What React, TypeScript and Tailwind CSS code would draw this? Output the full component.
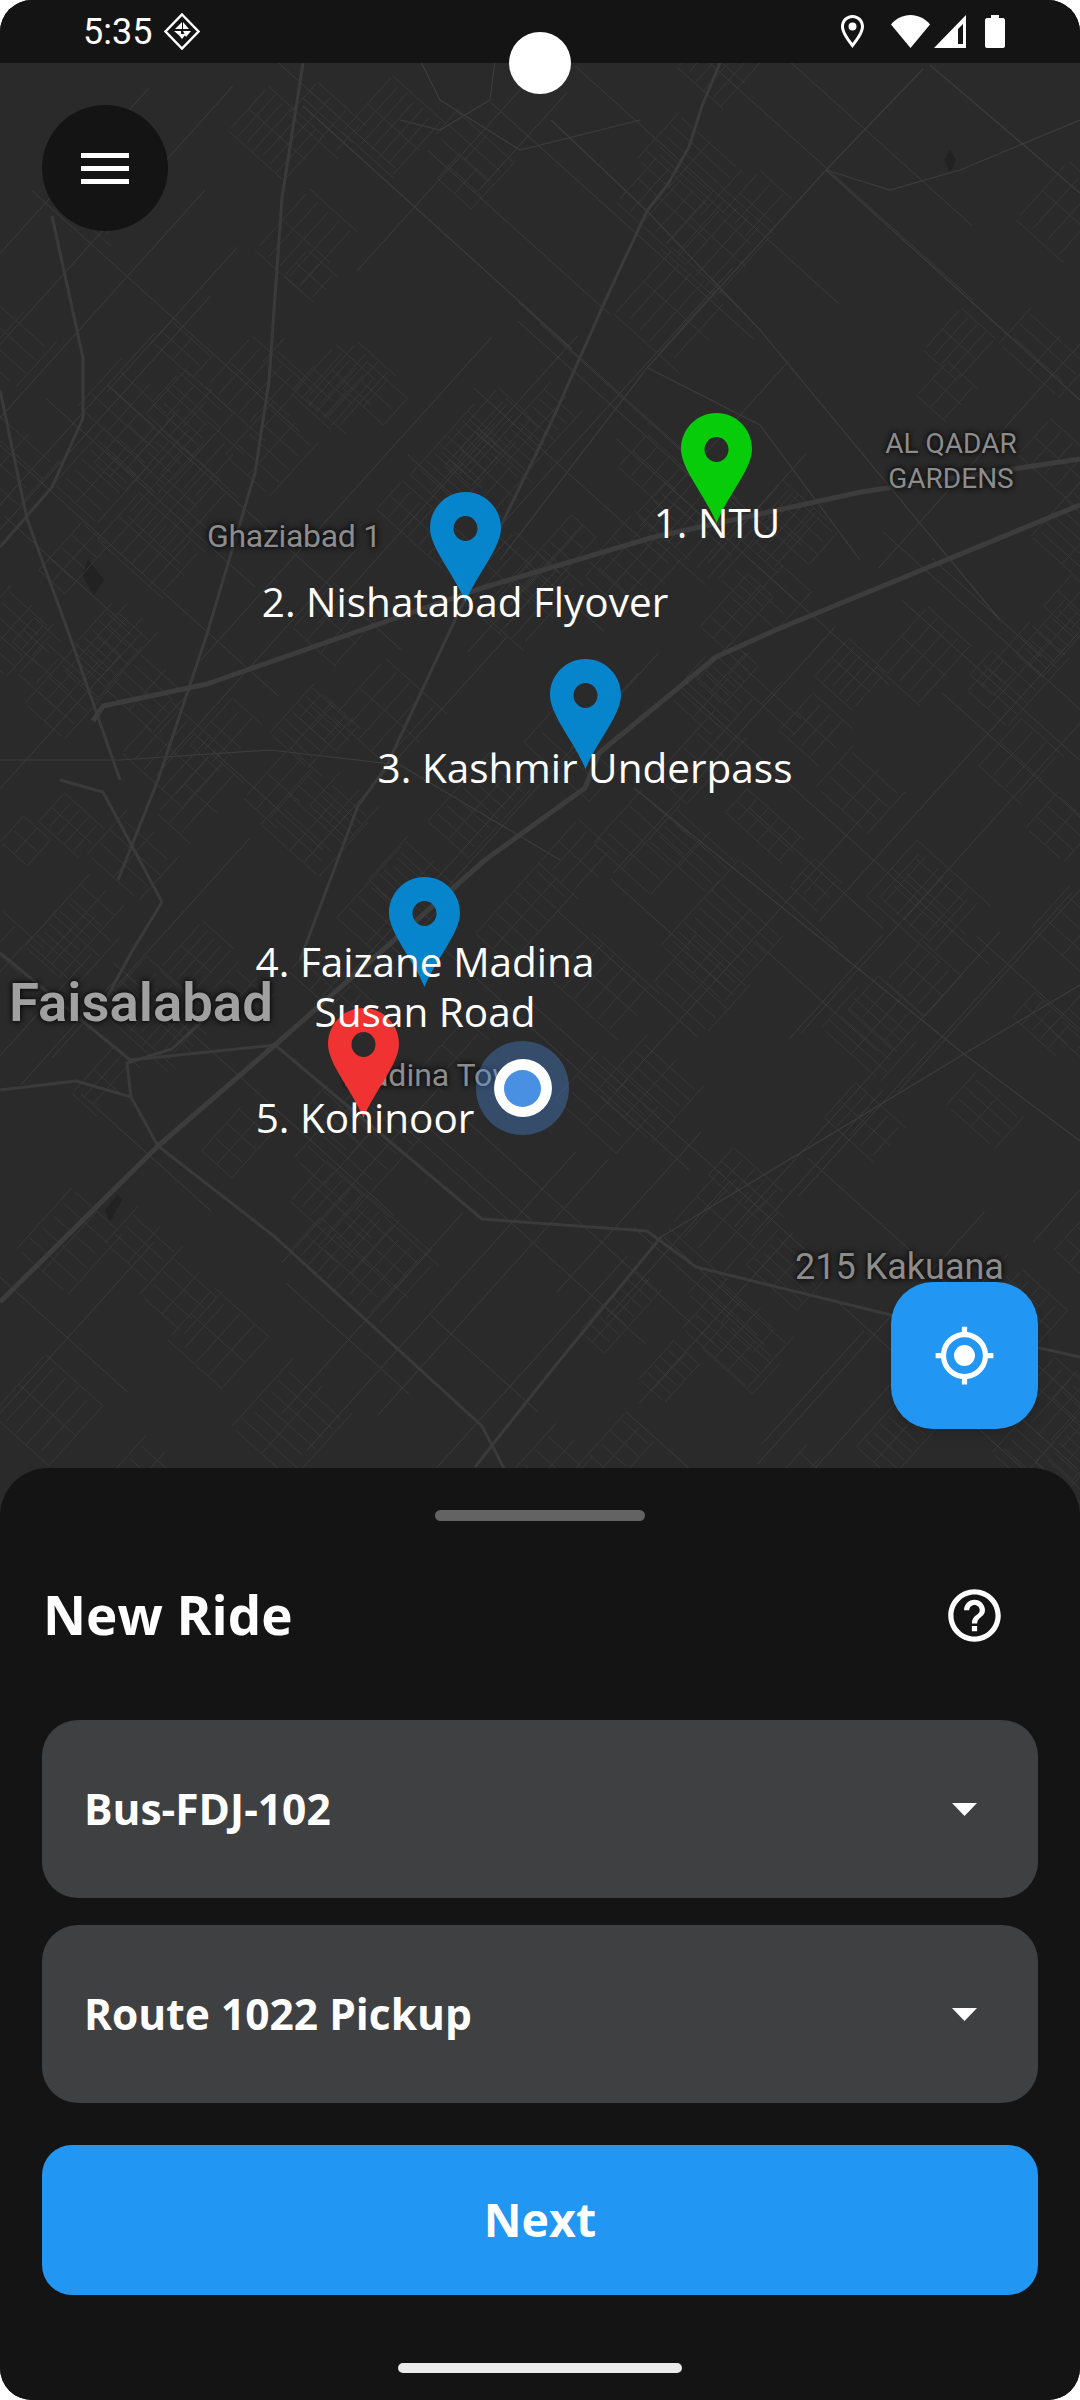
import { MdHelpOutline, MdMyLocation } from "react-icons/md";

// street pattern of the map, seeded so that every render gives the same picture
let seed = 20;
const rnd = () => {
  seed = (seed * 16807) % 2147483647;
  return seed / 2147483647;
};

const DOWN = (42 * Math.PI) / 180;
const UP = (-48 * Math.PI) / 180;

const seg = (x: number, y: number, a: number, len: number) => {
  const dx = (Math.cos(a) * len) / 2;
  const dy = (Math.sin(a) * len) / 2;
  return `M${(x - dx).toFixed(1)} ${(y - dy).toFixed(1)}L${(x + dx).toFixed(1)} ${(y + dy).toFixed(1)}`;
};

const buildBlocks = () => {
  let d = "";
  for (let i = 0; i < 190; i++) {
    const cx = rnd() * 1100;
    const cy = 60 + rnd() * 1420;
    // the north-east and the south are more open than the west
    const open = cx > 520 && cy < 500 ? 0.62 : cy > 1150 ? 0.3 : cx < 450 ? 0 : 0.18;
    if (rnd() < open) continue;
    const a = rnd() > 0.5 ? DOWN : UP;
    const b = a === DOWN ? UP : DOWN;
    const len = 30 + rnd() * 60;
    const wide = 30 + rnd() * 70;
    const step = 10 + rnd() * 10;
    for (let o = -wide / 2; o < wide / 2; o += step) {
      const x = cx + Math.cos(b) * o;
      const y = cy + Math.sin(b) * o;
      d += seg(x, y, a, len * (0.8 + rnd() * 0.2));
    }
    d += seg(cx, cy, b, wide);
    d += seg(cx + (Math.cos(a) * len) / 2, cy + (Math.sin(a) * len) / 2, b, wide);
    d += seg(cx - (Math.cos(a) * len) / 2, cy - (Math.sin(a) * len) / 2, b, wide);
  }
  return d;
};

const buildStreets = () => {
  let d = "";
  for (let i = 0; i < 90; i++) {
    const a = rnd() > 0.5 ? DOWN : UP;
    d += seg(rnd() * 1080, 60 + rnd() * 1420, a, 100 + rnd() * 360);
  }
  return d;
};

const blocks = buildBlocks();
const streets = buildStreets();

const bigRoads = [
  "M0 1302L158 1146L275 1045L485 860L585 788L599 753L716 657L778 629L1080 505",
  "M93 721L103 706L207 684L482 588L654 537L861 492L1080 459",
];

const midRoads = [
  "M720 63L702 106L689 147L668 184L647 211L606 299L551 423L455 620L386 767L358 806L300 960",
  "M303 63L282 198L269 381L255 473L207 634L158 780L118 880",
  "M52 216L83 358L83 418L52 487L0 547",
  "M0 390L27 519L69 634L120 780",
  "M275 1045L482 1219L647 1231L696 1267L895 1316L1080 1357",
  "M158 1146L275 1237L482 1426L510 1480",
  "M0 1090L76 1081L131 1097L158 1146",
  "M131 1097L127 1063L172 1049L225 1000",
  "M661 1237L551 1371L475 1467",
  "M0 953L130 1060L275 1045",
  "M162 902L103 792L60 780",
  "M162 902L131 953L100 1010",
];

const thinRoads = [
  "M303 106L572 349",
  "M551 120L647 211L760 330L1000 620",
  "M1080 985L964 1054L661 1237",
  "M634 788L964 1054L1080 1141",
  "M930 65L1080 193",
  "M923 69L826 170L647 368L500 560",
  "M826 170L1080 400",
  "M0 760L120 760L270 750L400 765L560 860",
  "M1080 120L960 170L890 190L826 170",
  "M648 368L760 425L860 560",
  "M420 60L440 100L520 150L640 120",
  "M495 60L490 100L440 130L400 120",
];

const pins = [
  { name: "green", box: "left-[681px] top-[350px]", fill: "#06cc0a" },
  { name: "blue-2", box: "left-[430px] top-[429px]", fill: "#0785cc" },
  { name: "blue-3", box: "left-[550px] top-[596px]", fill: "#0785cc" },
  { name: "blue-4", box: "left-[389px] top-[814px]", fill: "#0785cc" },
  { name: "red", box: "left-[328px] top-[945px]", fill: "#f03232" },
];

const stops = [
  { box: "left-[717px] top-[435px]", lines: ["1. NTU"] },
  { box: "left-[465px] top-[514px]", lines: ["2. Nishatabad Flyover"] },
  { box: "left-[585px] top-[680px]", lines: ["3. Kashmir Underpass"] },
  { box: "left-[425px] top-[874px]", lines: ["4. Faizane Madina", "Susan Road"] },
  { box: "left-[365px] top-[1030px]", lines: ["5. Kohinoor"] },
];

const mapLabel = "absolute font-['Roboto',sans-serif] text-[#8c8c8c] [text-shadow:0_0_4px_#0c0c0c,0_0_6px_#0c0c0c]";

function Pin({ fill, className }: { fill: string; className: string }) {
  return (
    <svg viewBox="0 0 71 110" className={`absolute w-[71px] h-[110px] ${className}`}>
      <path
        fill={fill}
        fillRule="evenodd"
        d="M35.5 0C55 0 71 16 71 36C71 56 47 82 35.5 110C24 82 0 56 0 36C0 16 16 0 35.5 0ZM35.5 24A12 12.5 0 1 0 35.5 49A12 12.5 0 1 0 35.5 24Z"
      />
    </svg>
  );
}

function Select({ label }: { label: string }) {
  return (
    <div className="h-[178px] rounded-[36px] bg-[#3f4042] flex items-center justify-between pl-[42px] pr-[61px]">
      <span className="text-[42.5px] font-bold text-white">{label}</span>
      <svg viewBox="0 0 25 13" className="w-[25px] h-[13px]">
        <path d="M0 0H25L12.5 13Z" fill="#fff" />
      </svg>
    </div>
  );
}

export default function App() {
  return (
    <div className="bg-white">
      <div className="relative w-[1080px] h-[2400px] rounded-[32px] overflow-hidden flex flex-col bg-[#141414] font-['Open_Sans',sans-serif]">
        {/* Status bar */}
        <div className="h-[63px] shrink-0 bg-[#141414] flex items-center justify-between pl-[83px] pr-[75px] text-white">
          <div className="flex items-center gap-[12px]">
            <span className="font-['Roboto',sans-serif] text-[36px] leading-none">5:35</span>
            <svg viewBox="0 0 36 37" className="w-[36px] h-[37px]">
              <path d="M18 1.5L34.5 18.5L18 35.5L1.5 18.5Z" fill="none" stroke="#fff" strokeWidth="2.5" />
              <path d="M18 9L11 16H18ZM19 9V16H25ZM10 18L17 18L17 24ZM19 18H27L22 24ZM18 26L14 21L22 21Z" fill="#fff" />
            </svg>
          </div>
          <div className="flex items-center">
            <svg viewBox="0 0 23 33" className="w-[23px] h-[33px] mr-[27px]">
              <path
                fill="#fff"
                fillRule="evenodd"
                d="M11.5 0C18 0 23 5 23 11.5C23 18 17 26 11.5 33C6 26 0 18 0 11.5C0 5 5 0 11.5 0ZM11.5 3C6.8 3 3 6.8 3 11.5C3 16 7.5 23 11.5 28C15.5 23 20 16 20 11.5C20 6.8 16.2 3 11.5 3ZM11.5 7.5A4 4 0 1 1 11.5 15.5A4 4 0 1 1 11.5 7.5Z"
              />
            </svg>
            <svg viewBox="0 0 39 33" className="w-[39px] h-[33px] mr-[4px]">
              <path d="M19.5 33L0 9.5C5 3.5 12 0 19.5 0C27 0 34 3.5 39 9.5Z" fill="#fff" />
            </svg>
            <svg viewBox="0 0 32 33" className="w-[32px] h-[33px] mr-[19px]">
              <path fill="#fff" fillRule="evenodd" d="M32 0V33H0ZM29 9L24 14V29H29Z" />
            </svg>
            <svg viewBox="0 0 20 33" className="w-[20px] h-[33px]">
              <path d="M6 0H14V3H18C19 3 20 4 20 5V31C20 32 19 33 18 33H2C1 33 0 32 0 31V5C0 4 1 3 2 3H6Z" fill="#fff" />
            </svg>
          </div>
        </div>

        {/* Camera hole */}
        <div className="absolute left-[509px] top-[32px] w-[62px] h-[62px] rounded-full bg-white z-20" />

        {/* Map */}
        <div className="relative flex-1 -mb-[48px] bg-[#2a2a2a] overflow-hidden">
          <svg viewBox="0 63 1080 1453" className="absolute inset-0 w-full h-full" fill="none">
            <path d="M950 150L956 160L950 172L944 160Z M88 560L104 580L94 595L82 575Z M105 1210L118 1195L122 1200L110 1222Z" fill="#222" />
            <path d={blocks} stroke="#383838" strokeWidth="1" />
            <path d={streets} stroke="#3c3c3c" strokeWidth="1" />
            {thinRoads.map((d) => (
              <path key={d} d={d} stroke="#3c3c3c" strokeWidth="1.2" />
            ))}
            {midRoads.map((d) => (
              <path key={d} d={d} stroke="#3a3a3a" strokeWidth="3" strokeLinejoin="round" />
            ))}
            {bigRoads.map((d) => (
              <path key={d} d={d} stroke="#3c3c3c" strokeWidth="5" strokeLinejoin="round" />
            ))}
          </svg>

          <span className={`${mapLabel} left-[207px] top-[457px] text-[32px] leading-[32px] tracking-[-0.3px]`}>Ghaziabad 1</span>
          <span className={`${mapLabel} left-[880px] top-[363px] w-[142px] text-center text-[28px] leading-[35px]`}>
            AL QADAR
            <br />
            GARDENS
          </span>
          <span className={`${mapLabel} left-[9px] top-[912px] text-[54.5px] leading-[54px] font-semibold text-[#a0a0a0]`}>Faisalabad</span>
          <span className={`${mapLabel} left-[343px] top-[996px] text-[32px] leading-[32px]`}>Madina Town</span>
          <span className={`${mapLabel} left-[795px] top-[1188px] text-[36px] leading-[32px]`}>215 Kakuana</span>

          {pins.map((p) => (
            <Pin key={p.name} fill={p.fill} className={p.box} />
          ))}

          {stops.map((s) => (
            <div key={s.lines[0]} className={`absolute -translate-x-1/2 w-max text-center text-white text-[40.5px] leading-[50px] ${s.box}`}>
              {s.lines.map((l) => (
                <div key={l}>{l}</div>
              ))}
            </div>
          ))}

          {/* Current position */}
          <div className="absolute left-[476px] top-[978px] w-[93px] h-[94px] rounded-full bg-[#4a90e2]/35 flex items-center justify-center">
            <div className="w-[58px] h-[58px] rounded-full bg-white flex items-center justify-center">
              <div className="w-[37px] h-[37px] rounded-full bg-[#4a90e2]" />
            </div>
          </div>

          <button className="absolute left-[42px] top-[42px] w-[126px] h-[126px] rounded-full bg-[#141414] flex flex-col items-center justify-center gap-[8px]">
            <span className="w-[48px] h-[5px] bg-white" />
            <span className="w-[48px] h-[5px] bg-white" />
            <span className="w-[48px] h-[5px] bg-white" />
          </button>

          <button className="absolute left-[891px] top-[1219px] w-[147px] h-[147px] rounded-[42px] bg-[#2196f3] shadow-lg flex items-center justify-center">
            <MdMyLocation size={63} color="#fff" />
          </button>
        </div>

        {/* Bottom sheet */}
        <div className="relative h-[932px] shrink-0 rounded-t-[48px] bg-[#141414] px-[42px] flex flex-col">
          <div className="mt-[42px] self-center w-[210px] h-[11px] rounded-full bg-[#636363]" />
          <div className="mt-[62px] h-[64px] flex items-center justify-between pr-[32px]">
            <h1 className="pl-[1px] text-[53px] font-bold text-white">New Ride</h1>
            <MdHelpOutline size={63} color="#fff" />
          </div>
          <div className="mt-[73px] flex flex-col gap-[27px]">
            <Select label="Bus-FDJ-102" />
            <Select label="Route 1022 Pickup" />
          </div>
          <button className="mt-[42px] h-[150px] rounded-[30px] bg-[#2196f3] text-white text-[46.5px] font-bold">Next</button>
          <div className="mt-[68px] self-center w-[284px] h-[10px] rounded-full bg-[#ececec]" />
        </div>
      </div>
    </div>
  );
}
